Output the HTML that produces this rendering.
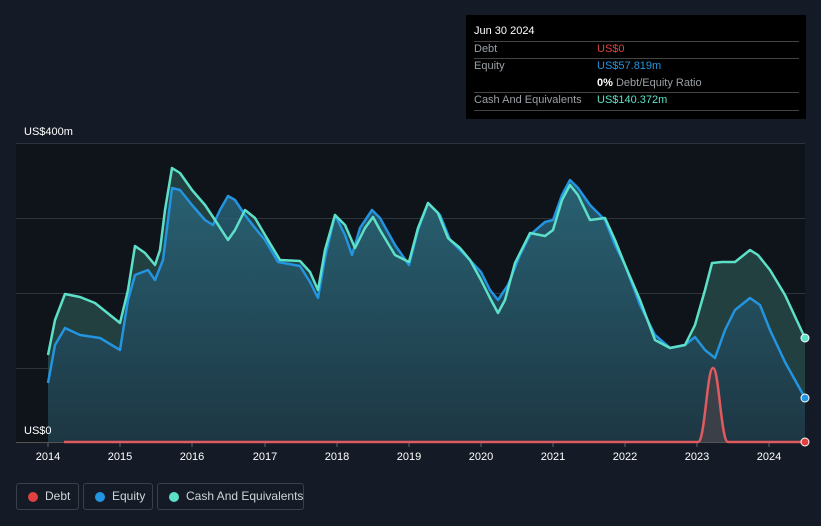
<!DOCTYPE html>
<html><head><meta charset="utf-8"><style>
body{margin:0;width:821px;height:526px;background:#151b26;font-family:"Liberation Sans",sans-serif;overflow:hidden;position:relative}
.tt{position:absolute;left:466px;top:15px;width:340px;height:104px;background:#000;color:#fff;font-size:11px}
.tt .r{position:absolute;left:8px;width:325px;border-top:1px solid #444}
.tt span{position:absolute;white-space:nowrap}
.lbl{color:#9aa0a6}
.ax{position:absolute;color:#fff;font-size:11px}
.leg{position:absolute;top:483px;height:27px;border:1px solid #3a404a;border-radius:3px;color:#d0d4d8;font-size:12px;line-height:25px;box-sizing:border-box;white-space:nowrap}
.leg i{position:absolute;left:11px;top:8px;width:10px;height:10px;border-radius:50%}
</style></head><body>
<svg width="821" height="526" style="position:absolute;left:0;top:0">
<defs>
<linearGradient id="ge" x1="0" y1="0" x2="0" y2="1"><stop offset="0" stop-color="#2a6a80" stop-opacity=".8"/><stop offset="1" stop-color="#1c3444" stop-opacity=".8"/></linearGradient>
</defs>
<rect x="16" y="143" width="789" height="299" fill="#0f131a"/>
<g stroke="#2e343c" stroke-width="1"><line x1="16" y1="143.5" x2="805" y2="143.5"/><line x1="16" y1="218.5" x2="805" y2="218.5"/><line x1="16" y1="293.5" x2="805" y2="293.5"/><line x1="16" y1="368.5" x2="805" y2="368.5"/><line x1="16" y1="442.5" x2="805" y2="442.5" stroke="#555"/></g>
<path fill="#22403f" d="M48,442 L48,355 L55,320 L65,294 L80,297 L95,303 L110,315 L120,323 L128,290 L135,246 L145,253 L155,265 L160,250 L165,210 L172,168 L180,173 L192,190 L205,205 L215,220 L228,240 L235,230 L245,210 L255,218 L265,235 L280,260 L300,261 L310,272 L318,290 L325,250 L335,215 L345,225 L355,248 L365,228 L373,217 L380,230 L395,255 L409,262 L418,228 L428,203 L438,213 L448,238 L460,248 L470,260 L481,280 L490,298 L498,313 L505,300 L515,263 L530,233 L545,236 L553,230 L562,200 L570,185 L578,195 L590,220 L605,218 L615,240 L625,265 L640,300 L655,340 L670,348 L685,345 L695,325 L705,290 L712,263 L722,262 L735,262 L750,250 L758,255 L770,270 L785,295 L805,338 L805,442 Z"/>
<path fill="url(#ge)" d="M48,442 L48,383 L55,345 L65,328 L80,335 L100,338 L120,350 L128,300 L135,275 L148,270 L155,280 L163,260 L172,188 L180,190 L192,205 L205,220 L213,225 L220,210 L228,196 L235,200 L245,215 L255,228 L265,240 L278,262 L300,266 L310,282 L318,298 L325,258 L335,215 L345,235 L352,255 L360,228 L372,210 L380,218 L395,245 L409,265 L418,230 L428,203 L440,215 L450,240 L465,255 L481,272 L490,290 L498,300 L508,285 L520,255 L530,235 L545,222 L553,220 L562,195 L570,180 L578,188 L590,205 L605,220 L615,245 L625,265 L640,305 L655,335 L670,348 L685,345 L695,337 L705,350 L715,358 L725,330 L735,310 L750,298 L760,305 L770,330 L785,362 L805,398 L805,442 Z"/>
<path fill="none" stroke="#2394df" stroke-width="2.5" stroke-linejoin="round" d="M48,383 L55,345 L65,328 L80,335 L100,338 L120,350 L128,300 L135,275 L148,270 L155,280 L163,260 L172,188 L180,190 L192,205 L205,220 L213,225 L220,210 L228,196 L235,200 L245,215 L255,228 L265,240 L278,262 L300,266 L310,282 L318,298 L325,258 L335,215 L345,235 L352,255 L360,228 L372,210 L380,218 L395,245 L409,265 L418,230 L428,203 L440,215 L450,240 L465,255 L481,272 L490,290 L498,300 L508,285 L520,255 L530,235 L545,222 L553,220 L562,195 L570,180 L578,188 L590,205 L605,220 L615,245 L625,265 L640,305 L655,335 L670,348 L685,345 L695,337 L705,350 L715,358 L725,330 L735,310 L750,298 L760,305 L770,330 L785,362 L805,398"/>
<path fill="none" stroke="#5de0c8" stroke-width="2.5" stroke-linejoin="round" d="M48,355 L55,320 L65,294 L80,297 L95,303 L110,315 L120,323 L128,290 L135,246 L145,253 L155,265 L160,250 L165,210 L172,168 L180,173 L192,190 L205,205 L215,220 L228,240 L235,230 L245,210 L255,218 L265,235 L280,260 L300,261 L310,272 L318,290 L325,250 L335,215 L345,225 L355,248 L365,228 L373,217 L380,230 L395,255 L409,262 L418,228 L428,203 L438,213 L448,238 L460,248 L470,260 L481,280 L490,298 L498,313 L505,300 L515,263 L530,233 L545,236 L553,230 L562,200 L570,185 L578,195 L590,220 L605,218 L615,240 L625,265 L640,300 L655,340 L670,348 L685,345 L695,325 L705,290 L712,263 L722,262 L735,262 L750,250 L758,255 L770,270 L785,295 L805,338"/>
<path fill="#3a3f48" stroke="#e05a5f" stroke-width="2.5" d="M64,442 L698,442 C705,442 707,368 713,368 C719,368 721,442 728,442 L805,442"/>
<circle cx="805" cy="338" r="4" fill="#5de0c8" stroke="#fff" stroke-width="1"/>
<circle cx="805" cy="398" r="4" fill="#2394df" stroke="#fff" stroke-width="1"/>
<circle cx="805" cy="442" r="4" fill="#e0403f" stroke="#fff" stroke-width="1"/>
<g stroke="#666"><line x1="48" y1="443" x2="48" y2="447"/><line x1="120" y1="443" x2="120" y2="447"/><line x1="192" y1="443" x2="192" y2="447"/><line x1="265" y1="443" x2="265" y2="447"/><line x1="337" y1="443" x2="337" y2="447"/><line x1="409" y1="443" x2="409" y2="447"/><line x1="481" y1="443" x2="481" y2="447"/><line x1="553" y1="443" x2="553" y2="447"/><line x1="625" y1="443" x2="625" y2="447"/><line x1="697" y1="443" x2="697" y2="447"/><line x1="769" y1="443" x2="769" y2="447"/></g>
<g fill="#fff" font-size="11" text-anchor="middle" font-family="Liberation Sans"><text x="48" y="460">2014</text><text x="120" y="460">2015</text><text x="192" y="460">2016</text><text x="265" y="460">2017</text><text x="337" y="460">2018</text><text x="409" y="460">2019</text><text x="481" y="460">2020</text><text x="553" y="460">2021</text><text x="625" y="460">2022</text><text x="697" y="460">2023</text><text x="769" y="460">2024</text></g>
</svg>
<div class="ax" style="left:24px;top:126px">US$400m</div>
<div class="ax" style="left:24px;top:425px">US$0</div>
<div class="tt">
<span style="left:8px;top:10px">Jun 30 2024</span>
<div class="r" style="top:26px"></div>
<span class="lbl" style="left:8px;top:28px">Debt</span><span style="left:131px;top:28px;color:#e0403f">US$0</span>
<div class="r" style="top:43px"></div>
<span class="lbl" style="left:8px;top:45px">Equity</span><span style="left:131px;top:45px;color:#2394df">US$57.819m</span>
<span style="left:131px;top:62px"><b>0%</b> <span class="lbl" style="position:static">Debt/Equity Ratio</span></span>
<div class="r" style="top:77px"></div>
<span class="lbl" style="left:8px;top:79px">Cash And Equivalents</span><span style="left:131px;top:79px;color:#5de0c8">US$140.372m</span>
<div class="r" style="top:95px"></div>
</div>
<div class="leg" style="left:16px;width:63px"><i style="background:#e0403f"></i><span style="position:absolute;left:28px">Debt</span></div>
<div class="leg" style="left:83px;width:70px"><i style="background:#2394df"></i><span style="position:absolute;left:28px">Equity</span></div>
<div class="leg" style="left:157px;width:147px"><i style="background:#5de0c8"></i><span style="position:absolute;left:28px">Cash And Equivalents</span></div>
</body></html>
